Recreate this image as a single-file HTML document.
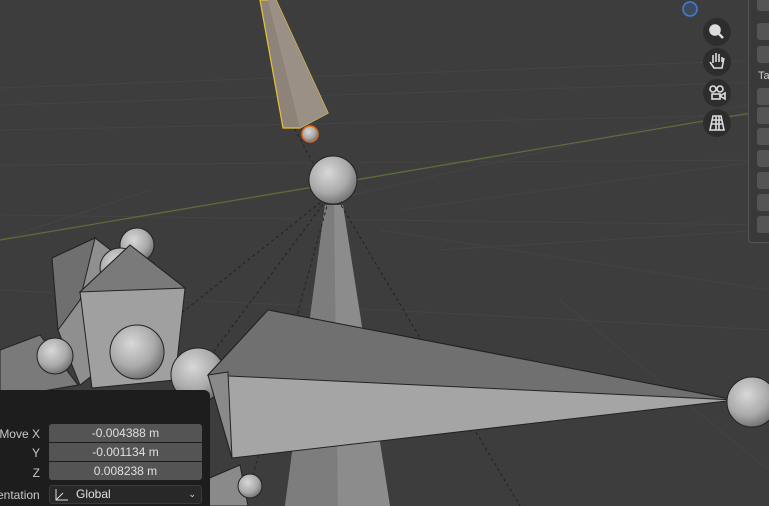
<!DOCTYPE html>
<html><head><style>
body{margin:0;width:769px;height:506px;overflow:hidden;background:#3d3d3d;font-family:"Liberation Sans",sans-serif;}
svg{position:absolute;left:0;top:0}
.panel{position:absolute;left:0;top:390px;width:210px;height:116px;background:#1d1d1d;border-top-right-radius:6px;}
.lbl{position:absolute;color:#c8c8c8;font-size:12px;text-align:right;width:40px;white-space:nowrap;}
.fld{position:absolute;left:49px;width:153px;height:18px;background:#545454;color:#e0e0e0;font-size:12px;text-align:center;line-height:18px;}
.rp{position:absolute;left:748px;top:0;width:21px;height:242px;border-left:1px solid #555;border-bottom:1px solid #555;border-bottom-left-radius:4px;background:#393939}
.b{position:absolute;left:8px;width:14px;height:17px;background:#545454;border-radius:3px}
</style></head><body>
<svg width="769" height="506">
<defs><radialGradient id="sp" cx="0.4" cy="0.35" r="0.7"><stop offset="0" stop-color="#d8d8d8"/><stop offset="0.6" stop-color="#aaa"/><stop offset="1" stop-color="#6a6a6a"/></radialGradient></defs>
<g stroke="#444" stroke-width="1">
<line x1="0" y1="88" x2="769" y2="60"/><line x1="0" y1="105" x2="769" y2="82"/><line x1="0" y1="130" x2="769" y2="115"/>
<line x1="0" y1="165" x2="769" y2="160"/><line x1="0" y1="215" x2="769" y2="225"/><line x1="0" y1="290" x2="769" y2="330"/>
<line x1="330" y1="200" x2="769" y2="100"/><line x1="400" y1="210" x2="769" y2="160"/><line x1="440" y1="250" x2="769" y2="230"/>
<line x1="380" y1="230" x2="769" y2="290"/><line x1="560" y1="300" x2="769" y2="470"/><line x1="150" y1="190" x2="0" y2="240"/>
</g>
<line x1="0" y1="240" x2="769" y2="110" stroke="#5b6e3a" stroke-width="1.3"/>
<polygon points="325,205 343,205 390,506 285,506" fill="#8c8c8c"/>
<polygon points="325,205 334,205 338,506 285,506" fill="#7d7d7d"/>
<g stroke="#222" stroke-dasharray="3,3" stroke-width="1" fill="none">
<line x1="330" y1="195" x2="160" y2="330"/><line x1="330" y1="195" x2="200" y2="370"/><line x1="330" y1="195" x2="250" y2="486"/>
<line x1="335" y1="195" x2="520" y2="506"/><line x1="330" y1="195" x2="290" y2="120"/></g>
<polygon points="260,0 276,0 328,113 300,128 283,128" fill="#8d8378" stroke="#e8c23a" stroke-width="1.2"/>
<polygon points="268,0 276,0 328,113 300,128" fill="#9a9086"/>
<circle cx="310" cy="134" r="8" fill="url(#sp)" stroke="#e06a20" stroke-width="1.5"/>
<circle cx="333" cy="180" r="24" fill="url(#sp)" stroke="#222"/>
<polygon points="52,258 95,238 130,265 125,350 80,385 58,330" fill="#8f8f8f" stroke="#222"/>
<polygon points="52,258 95,238 80,300 58,330" fill="#6f6f6f" stroke="#222"/>
<circle cx="137" cy="245" r="17" fill="url(#sp)" stroke="#222"/>
<circle cx="120" cy="268" r="20" fill="url(#sp)" stroke="#222"/>
<polygon points="80,292 130,245 185,288 175,380 92,388" fill="#a0a0a0" stroke="#222"/>
<polygon points="80,292 130,245 185,288" fill="#7a7a7a" stroke="#222"/>
<polygon points="0,350 40,335 78,385 20,395 0,395" fill="#7a7a7a" stroke="#222"/>
<circle cx="55" cy="356" r="18" fill="url(#sp)" stroke="#222"/>
<circle cx="137" cy="352" r="27" fill="url(#sp)" stroke="#222"/>
<circle cx="198" cy="375" r="27" fill="url(#sp)" stroke="#222"/>
<polygon points="208,375 268,310 735,400 232,458" fill="#a5a5a5" stroke="#222"/>
<polygon points="208,375 268,310 735,400" fill="#707070" stroke="#222"/>
<polygon points="208,375 232,458 228,372" fill="#8a8a8a" stroke="#222"/>
<circle cx="752" cy="402" r="25" fill="url(#sp)" stroke="#222"/>
<polygon points="205,480 240,465 248,506 205,506" fill="#8a8a8a" stroke="#222"/>
<circle cx="250" cy="486" r="12" fill="url(#sp)" stroke="#222"/>
<circle cx="690" cy="9" r="7" fill="#3d4a5e" stroke="#3f7fd8" stroke-width="1.5"/>
<g fill="#2d2d2d"><circle cx="717" cy="32" r="14"/><circle cx="717" cy="62" r="14"/><circle cx="717" cy="93" r="14"/><circle cx="717" cy="123" r="14"/></g>
<g stroke="#ddd" fill="none" stroke-width="1.6">
<circle cx="715" cy="30" r="5" fill="#ddd"/><line x1="719" y1="34" x2="723" y2="38" stroke-width="2.5"/>
<path d="M710 62 L714 68 H722 L724 58 M713 63 V55 M716 62 V53 M719 62 V54 M722 62 V57"/>
<circle cx="713" cy="89" r="3"/><circle cx="720" cy="89" r="3"/><rect x="712" y="94" width="8" height="5"/><path d="M720 96 L725 93 V99 Z"/>
<path d="M710 130 L713 116 H721 L724 130 Z M711 124 H723 M712 120 H722 M716 116 V130 M719 116 V130"/>
</g>
</svg>
<div class="rp">
<div class="b" style="top:-6px"></div><div class="b" style="top:23px"></div><div class="b" style="top:46px"></div>
<div style="position:absolute;left:9px;top:70px;color:#ccc;font-size:11px">Ta</div>
<div class="b" style="top:88px"></div><div class="b" style="top:107px"></div><div class="b" style="top:128px"></div><div class="b" style="top:150px"></div><div class="b" style="top:172px"></div><div class="b" style="top:194px"></div><div class="b" style="top:216px"></div>
</div>
<div class="panel">
<div class="lbl" style="top:37px;left:-20px;width:60px">Move X</div>
<div class="lbl" style="top:56px">Y</div>
<div class="lbl" style="top:76px">Z</div>
<div class="lbl" style="top:98px;left:-3px">entation</div>
<div class="fld" style="top:34px;border-radius:3px 3px 0 0">-0.004388 m</div>
<div class="fld" style="top:53px">-0.001134 m</div>
<div class="fld" style="top:72px;border-radius:0 0 3px 3px">0.008238 m</div>
<div class="fld" style="top:95px;height:19px;background:#282828;border:1px solid #3a3a3a;border-radius:3px;text-align:left;box-sizing:border-box;line-height:17px;padding-left:26px">Global<span style="position:absolute;right:5px;font-size:9px">&#8964;</span>
<svg width="16" height="14" style="left:4px;top:2px"><path d="M2 1 V12 H14 M2 12 L9 5" stroke="#ddd" fill="none"/></svg></div>
</div>
</body></html>
